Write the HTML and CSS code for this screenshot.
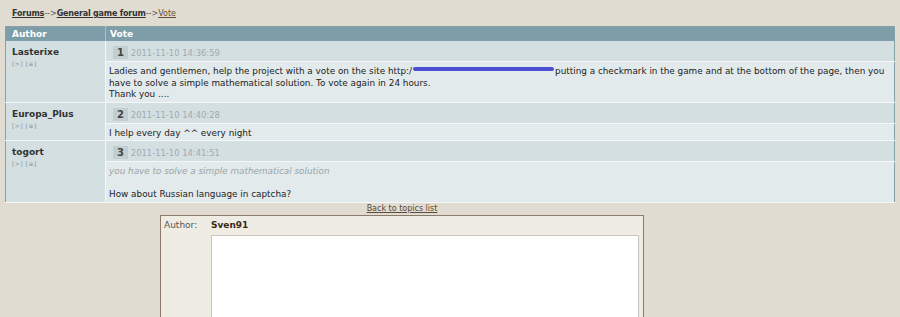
FILE: index.html
```html
<!DOCTYPE html>
<html lang="en">
<head>
    <meta charset="UTF-8">
    <title>Vote</title>
    <link rel="stylesheet" href="styles.css">
</head>
<body>
    <div class="crumbs">
        <a class="crumb" href="#">Forums</a>--&gt;<a class="crumb" href="#">General game forum</a>--&gt;<a class="crumb-last" href="#">Vote</a>
    </div>

    <table class="topic">
        <tr class="head">
            <th class="col-author">Author</th>
            <th>Vote</th>
        </tr>
        <tr class="meta">
            <td class="author" rowspan="2">
                <div class="name">Lasterixe</div>
                <div class="tools">[&gt;] [&#8801;]</div>
            </td>
            <td><span class="num">1</span> <span class="date">2011-11-10 14:36:59</span></td>
        </tr>
        <tr class="msg">
            <td>Ladies and gentlemen, help the project with a vote on the site http:/<span class="hidden-url"></span>putting a checkmark in the game and at the bottom of the page, then you have to solve a simple mathematical solution. To vote again in 24 hours.<br>Thank you ....</td>
        </tr>
        <tr class="meta">
            <td class="author" rowspan="2">
                <div class="name">Europa_Plus</div>
                <div class="tools">[&gt;] [&#8801;]</div>
            </td>
            <td><span class="num">2</span> <span class="date">2011-11-10 14:40:28</span></td>
        </tr>
        <tr class="msg">
            <td>I help every day ^^ every night</td>
        </tr>
        <tr class="meta">
            <td class="author" rowspan="2">
                <div class="name">togort</div>
                <div class="tools">[&gt;] [&#8801;]</div>
            </td>
            <td><span class="num">3</span> <span class="date">2011-11-10 14:41:51</span></td>
        </tr>
        <tr class="msg">
            <td><span class="quote">you have to solve a simple mathematical solution</span><br><br>How about Russian language in captcha?</td>
        </tr>
    </table>

    <div class="reply">
        <div class="back"><a href="#">Back to topics list</a></div>
        <div class="reply-box">
            <div class="reply-label">Author:</div>
            <div class="reply-name">Sven91</div>
            <div></div>
            <textarea class="reply-text"></textarea>
        </div>
    </div>
</body>
</html>
```

FILE: styles.css
```css
body { margin: 0; padding: 5px 5px 0; background: #e0dcd1; font-family: "DejaVu Sans", Verdana, sans-serif; font-size: 9px; color: #222; overflow: hidden; }
a { color: #333; }

.crumbs { padding: 3px 0 0 7px; height: 18px; line-height: 12px; color: #555; font-size: 8px; }
.crumb { font-weight: bold; color: #333; letter-spacing: -0.2px; }
.crumb-last { color: #6b4b2b; }

.topic { width: 890px; border-collapse: collapse; border: 1px solid #86a0a7; }
.topic td, .topic th { padding: 0; vertical-align: top; text-align: left; }
.head th { background: #7d9ea8; color: #fff; font-weight: bold; height: 14px; line-height: 14px; padding-left: 4px; border-left: 1px solid #aac0c6; }
.head th.col-author { width: 93px; padding-left: 6px; border-left: none; }

.author { background: #d4dfe2; padding: 6px 0 0 6px !important; border-right: 1px solid #f4f7f8; border-bottom: 1px solid #f4f7f8; }
.name { font-weight: bold; color: #333; line-height: 11px; }
.tools { font-size: 6px; color: #7f8b8e; margin-top: 2px; letter-spacing: 0.5px; }

.meta td { background: #d4dfe2; height: 20px; }
.meta td:last-child { padding: 5px 0 0 7px; height: 15px; }
.num { display: inline-block; background: #c3ced1; color: #444; font-weight: bold; padding: 0 4px; line-height: 13px; font-size: 10px; }
.date { color: #9fabae; font-size: 8.4px; }

.msg td { background: #e3eaec; padding: 4px 6px 1px 3px; line-height: 11.5px; font-size: 8.85px; border-top: 1px solid #f4f7f8; border-bottom: 1px solid #f4f7f8; color: #222; }
.hidden-url { display: inline-block; width: 141px; height: 4px; margin: 0 1px; background: #4a4fd2; vertical-align: 3px; border-radius: 2px; }
.quote { color: #9aa4a7; font-style: italic; }

.reply { width: 484px; margin-left: 155px; }
.back { text-align: center; height: 12px; line-height: 12px; font-size: 8px; }
.back a { color: #5b4a3a; }
.reply-box { display: grid; grid-template-columns: 47px 1fr; grid-template-rows: 19px 200px; background: #efece3; border: 1px solid #8b7b6b; border-bottom: none; padding: 0 4px 0 3px; }
.reply-label { color: #555; line-height: 12px; padding-top: 3px; }
.reply-name { font-weight: bold; color: #3a2a1a; line-height: 12px; padding-top: 3px; }
.reply-text { background: #fff; border: 1px solid #c8c6c0; margin: 0; resize: none; }
```
